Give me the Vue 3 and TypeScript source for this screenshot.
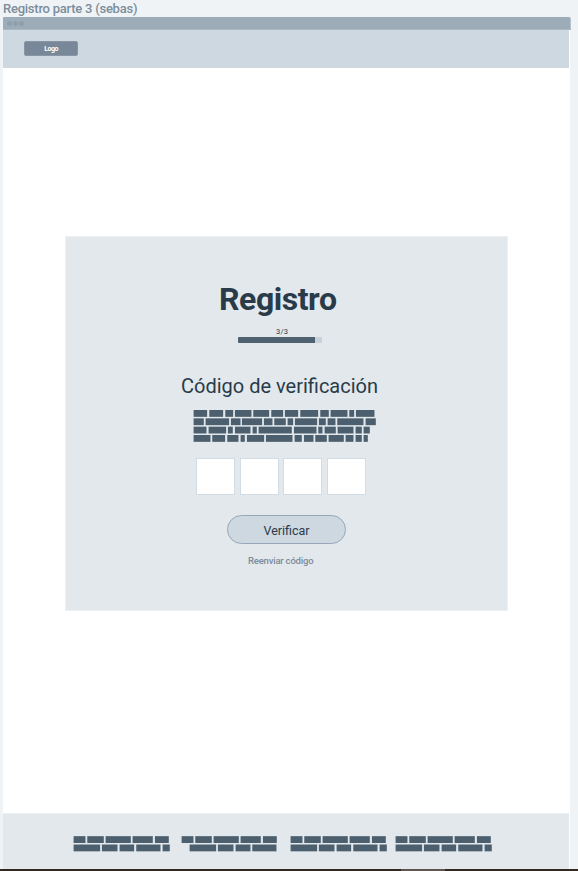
<script setup lang="ts">
type Segment = [start: number, end: number]

interface TextBlock {
  id: string
  lines: Segment[][]
}

// Segment bounds are expressed in thirds of a pixel.
const paragraph: Segment[][] = [
  [[0, 43], [47, 91], [95, 121], [124, 176], [179, 229], [233, 271], [274, 316], [320, 376], [380, 408], [411, 464], [467, 484], [487, 545]],
  [[0, 33], [36, 109], [112, 143], [145, 208], [211, 239], [242, 279], [282, 301], [304, 373], [376, 399], [402, 428], [431, 512], [516, 549]],
  [[0, 41], [45, 100], [103, 120], [124, 173], [177, 192], [195, 297], [301, 371], [374, 389], [393, 429], [432, 482], [486, 507], [510, 531]],
  [[0, 53], [56, 97], [101, 137], [141, 156], [160, 214], [217, 299], [303, 327], [331, 362], [365, 402], [405, 453], [456, 482], [486, 507], [510, 525]],
]

const topLine: Segment[] = [[0, 38], [41, 93], [96, 174], [177, 240], [244, 288]]
const bottomLine: Segment[] = [[0, 82], [85, 134], [138, 184], [188, 263], [267, 291]]
const indentedLine: Segment[] = [[24, 106], [109, 158], [162, 209], [212, 287]]

const footerBlocks: TextBlock[] = [
  { id: 'first', lines: [topLine, bottomLine] },
  { id: 'second', lines: [topLine, indentedLine] },
  { id: 'third', lines: [topLine, bottomLine] },
  { id: 'fourth', lines: [topLine, bottomLine] },
]

const digits = ['', '', '', '']
</script>

<template>
  <div class="canvas">
    <div class="frame-label"><span>Registro parte 3 (sebas)</span></div>
    <div class="window-bar"><i></i><i></i><i></i></div>
    <div class="page">
      <header class="header"><div class="logo">Logo</div></header>
      <main class="main">
        <section class="card">
          <h1>Registro</h1>
          <div class="step">3/3</div>
          <div class="progress"><div class="progress-fill"></div></div>
          <h2>Código de verificación</h2>
          <svg class="paragraph" width="183" height="33" viewBox="0 0 549 99">
            <g v-for="(line, row) in paragraph" :key="row">
              <rect v-for="([start, end], i) in line" :key="i" :x="start + 1.8" :y="row * 25" :width="end - start - 2.4" height="20.5" />
            </g>
          </svg>
          <div class="code">
            <input v-for="(_, i) in digits" :key="i" v-model="digits[i]" maxlength="1" inputmode="numeric" />
          </div>
          <button class="verify" type="button"><span>Verificar</span></button>
          <a class="resend">Reenviar código</a>
        </section>
      </main>
      <footer class="footer">
        <svg v-for="block in footerBlocks" :key="block.id" :class="block.id" width="97" height="16" viewBox="0 0 291 48">
          <g v-for="(line, row) in block.lines" :key="row">
            <rect v-for="([start, end], i) in line" :key="i" :x="start + 1.8" :y="row * 25 + 0.5" :width="end - start - 2.4" height="20.5" />
          </g>
        </svg>
      </footer>
    </div>
    <div class="bottom-edge"><div class="scroll-thumb"></div></div>
  </div>
</template>

<style>
body {
  background: #eff3f6;
}
</style>

<style scoped>
* {
  box-sizing: border-box;
}
.canvas {
  width: 578px;
  height: 871px;
  display: flex;
  flex-direction: column;
  overflow: hidden;
  background: #eff3f6;
  font-family: Roboto, "Liberation Sans", sans-serif;
  color: #293b49;
}
.frame-label {
  height: 17px;
  padding-left: 3px;
  font-size: 13px;
  line-height: 17px;
  font-weight: 500;
  letter-spacing: -0.24px;
  color: #7c8d9b;
  white-space: nowrap;
}
.window-bar {
  width: 568px;
  height: 13px;
  margin-left: 3px;
  padding: 4px 0 0 4px;
  display: flex;
  gap: 1px;
  background: #9dacb9;
  border-right: 1px solid #b5c1cb;
  border-bottom: 1px solid #aab8c4;
  border-radius: 1px 2px 0 0;
}
.window-bar i {
  width: 5px;
  height: 5px;
  border-radius: 50%;
  background: #8f9fad;
}
.page {
  width: 567px;
  height: 839px;
  margin-left: 3px;
  display: flex;
  flex-direction: column;
  background: #fff;
}
.header {
  width: 566px;
  height: 38px;
  padding: 11px 0 0 21px;
  background: #cdd8e1;
}
.logo {
  width: 54px;
  height: 15px;
  border: 1px solid #8795a4;
  border-radius: 2px;
  background: #788898;
  color: #fff;
  font-size: 7px;
  line-height: 14px;
  font-weight: 700;
  letter-spacing: -0.5px;
  text-align: center;
}
.main {
  flex: 1;
  padding: 168px 0 0 62px;
}
.card {
  width: 443px;
  height: 375px;
  display: flex;
  flex-direction: column;
  align-items: flex-start;
  background: #e2e8ec;
  border: 1px solid #ecf0f3;
}
h1 {
  margin: 43px 0 0 153px;
  height: 38px;
  font-size: 32px;
  line-height: 38px;
  font-weight: 700;
  letter-spacing: -0.45px;
}
.step {
  margin: 9px 0 0 210px;
  height: 10px;
  font-size: 7.5px;
  line-height: 10px;
  letter-spacing: 0.2px;
}
.progress {
  width: 84px;
  height: 6px;
  margin: 0 0 0 172px;
  border-radius: 1px;
  background: #c8d2db;
}
.progress-fill {
  width: 77px;
  height: 6px;
  border-radius: 1px 0 0 1px;
  background: #4f6271;
}
h2 {
  margin: 30px 0 0 115px;
  height: 26px;
  font-size: 20px;
  line-height: 26px;
  font-weight: 400;
  letter-spacing: 0;
  white-space: nowrap;
}
svg {
  display: block;
  fill: #4c5f6e;
}
.paragraph {
  margin: 11px 0 0 127px;
}
.code {
  display: flex;
  gap: 4.5px;
  margin: 15px 0 0 130px;
}
.code input {
  width: 39px;
  height: 37px;
  padding: 0;
  border: 1px solid #d2dce4;
  border-radius: 0;
  background: #fff;
  font: 20px Roboto, sans-serif;
  text-align: center;
}
.verify {
  width: 119px;
  height: 29px;
  margin: 20px 0 0 161px;
  padding: 1px 0 0;
  border: 1px solid #98a7b7;
  border-radius: 15px;
  background: #cdd8e1;
  color: #293b49;
  font: 12.5px/25px Roboto, sans-serif;
}
.resend {
  height: 14px;
  margin: 10px 0 0 182px;
  font-size: 9.5px;
  line-height: 14px;
  font-weight: 500;
  letter-spacing: -0.2px;
  color: #7c8b9b;
  white-space: nowrap;
}
.footer {
  width: 566px;
  height: 56px;
  padding: 22px 0 0 70px;
  display: flex;
  background: #e2e8ec;
  border-top: 1px solid #eaeff2;
}
.second {
  margin-left: 11px;
}
.third {
  margin-left: 12px;
}
.fourth {
  margin-left: 8px;
}
.bottom-edge {
  height: 2px;
  padding-left: 401px;
  background: #35281f;
}
.scroll-thumb {
  width: 44px;
  height: 2px;
  background: #62554d;
}
</style>
